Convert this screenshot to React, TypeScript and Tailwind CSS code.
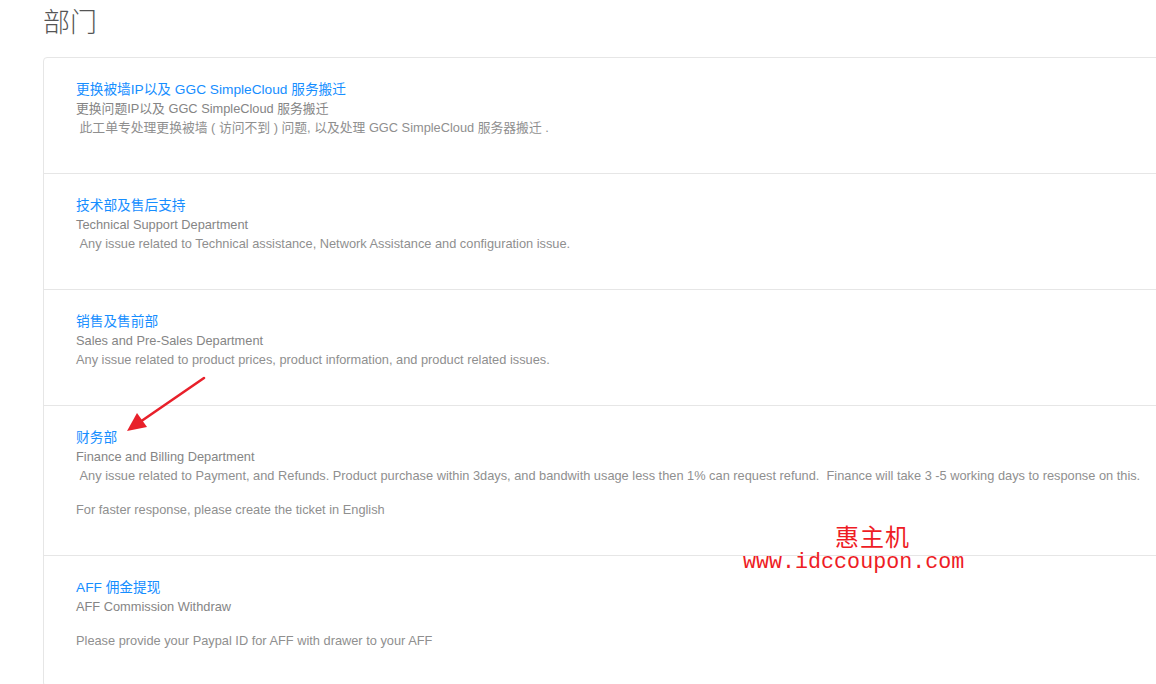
import React from 'react';

type Dept = {
  title: string;
  subtitle: string;
  lines: Array<string | null>;
};

const depts: Dept[] = [
  {
    title: '更换被墙IP以及 GGC SimpleCloud 服务搬迁',
    subtitle: '更换问题IP以及 GGC SimpleCloud 服务搬迁',
    lines: ['\u00a0此工单专处理更换被墙 ( 访问不到 ) 问题, 以及处理 GGC SimpleCloud 服务器搬迁 .'],
  },
  {
    title: '技术部及售后支持',
    subtitle: 'Technical Support Department',
    lines: ['\u00a0Any issue related to Technical assistance, Network Assistance and configuration issue.'],
  },
  {
    title: '销售及售前部',
    subtitle: 'Sales and Pre-Sales Department',
    lines: ['Any issue related to product prices, product information, and product related issues.'],
  },
  {
    title: '财务部',
    subtitle: 'Finance and Billing Department',
    lines: [
      '\u00a0Any issue related to Payment, and Refunds. Product purchase within 3days, and bandwith usage less then 1% can request refund.\u00a0 Finance will take 3 -5 working days to response on this.',
      null,
      'For faster response, please create the ticket in English',
    ],
  },
  {
    title: 'AFF 佣金提现',
    subtitle: 'AFF Commission Withdraw',
    lines: [null, 'Please provide your Paypal ID for AFF with drawer to your AFF'],
  },
];

const sans = "font-['Liberation_Sans','Noto_Sans_CJK_SC',sans-serif]";

export default function App() {
  return (
    <div className={`relative h-[684px] w-[1156px] overflow-hidden bg-white pl-[43px] ${sans}`}>
      <h1 className="mt-[8px] text-[27px] leading-[30px] font-light text-[#555]">部门</h1>

      <div className="mt-[19px] w-[1200px] rounded-[4px] border border-[#e6e6e6]">
        {depts.map((d, i) => (
          <div
            key={d.title}
            className={`pt-[22px] pb-[36px] pl-[32px] text-[12.8px] leading-[19px] ${i > 0 ? 'border-t border-[#e6e6e6]' : ''}`}
          >
            <a className="block text-[13.7px] text-[#168eff]">{d.title}</a>
            <div className="text-[#858585]">{d.subtitle}</div>
            {d.lines.map((line, j) =>
              line === null ? (
                <div key={j} className="h-[15px]" />
              ) : (
                <div key={j} className="whitespace-pre text-[#8f8f8f]">
                  {line}
                </div>
              ),
            )}
          </div>
        ))}
      </div>

      {/* annotation arrow */}
      <svg className="absolute left-[120px] top-[372px]" width="92" height="64" viewBox="120 372 92 64">
        <line x1="204" y1="378" x2="140" y2="422" stroke="#e8202a" strokeWidth="2.6" strokeLinecap="round" />
        <polygon points="127,431 137,413 147,427" fill="#e8202a" />
      </svg>

      {/* watermark */}
      <div className="absolute left-[835px] top-[524px] font-['Liberation_Serif','Noto_Sans_CJK_SC',serif] text-[24px] leading-[28px] tracking-[1px] text-[#ee1c25]">
        惠主机
      </div>
      <div className="absolute left-[743px] top-[551px] font-['Liberation_Mono',monospace] text-[21.7px] leading-[24px] text-[#ee1c25]">
        www.idccoupon.com
      </div>
    </div>
  );
}
